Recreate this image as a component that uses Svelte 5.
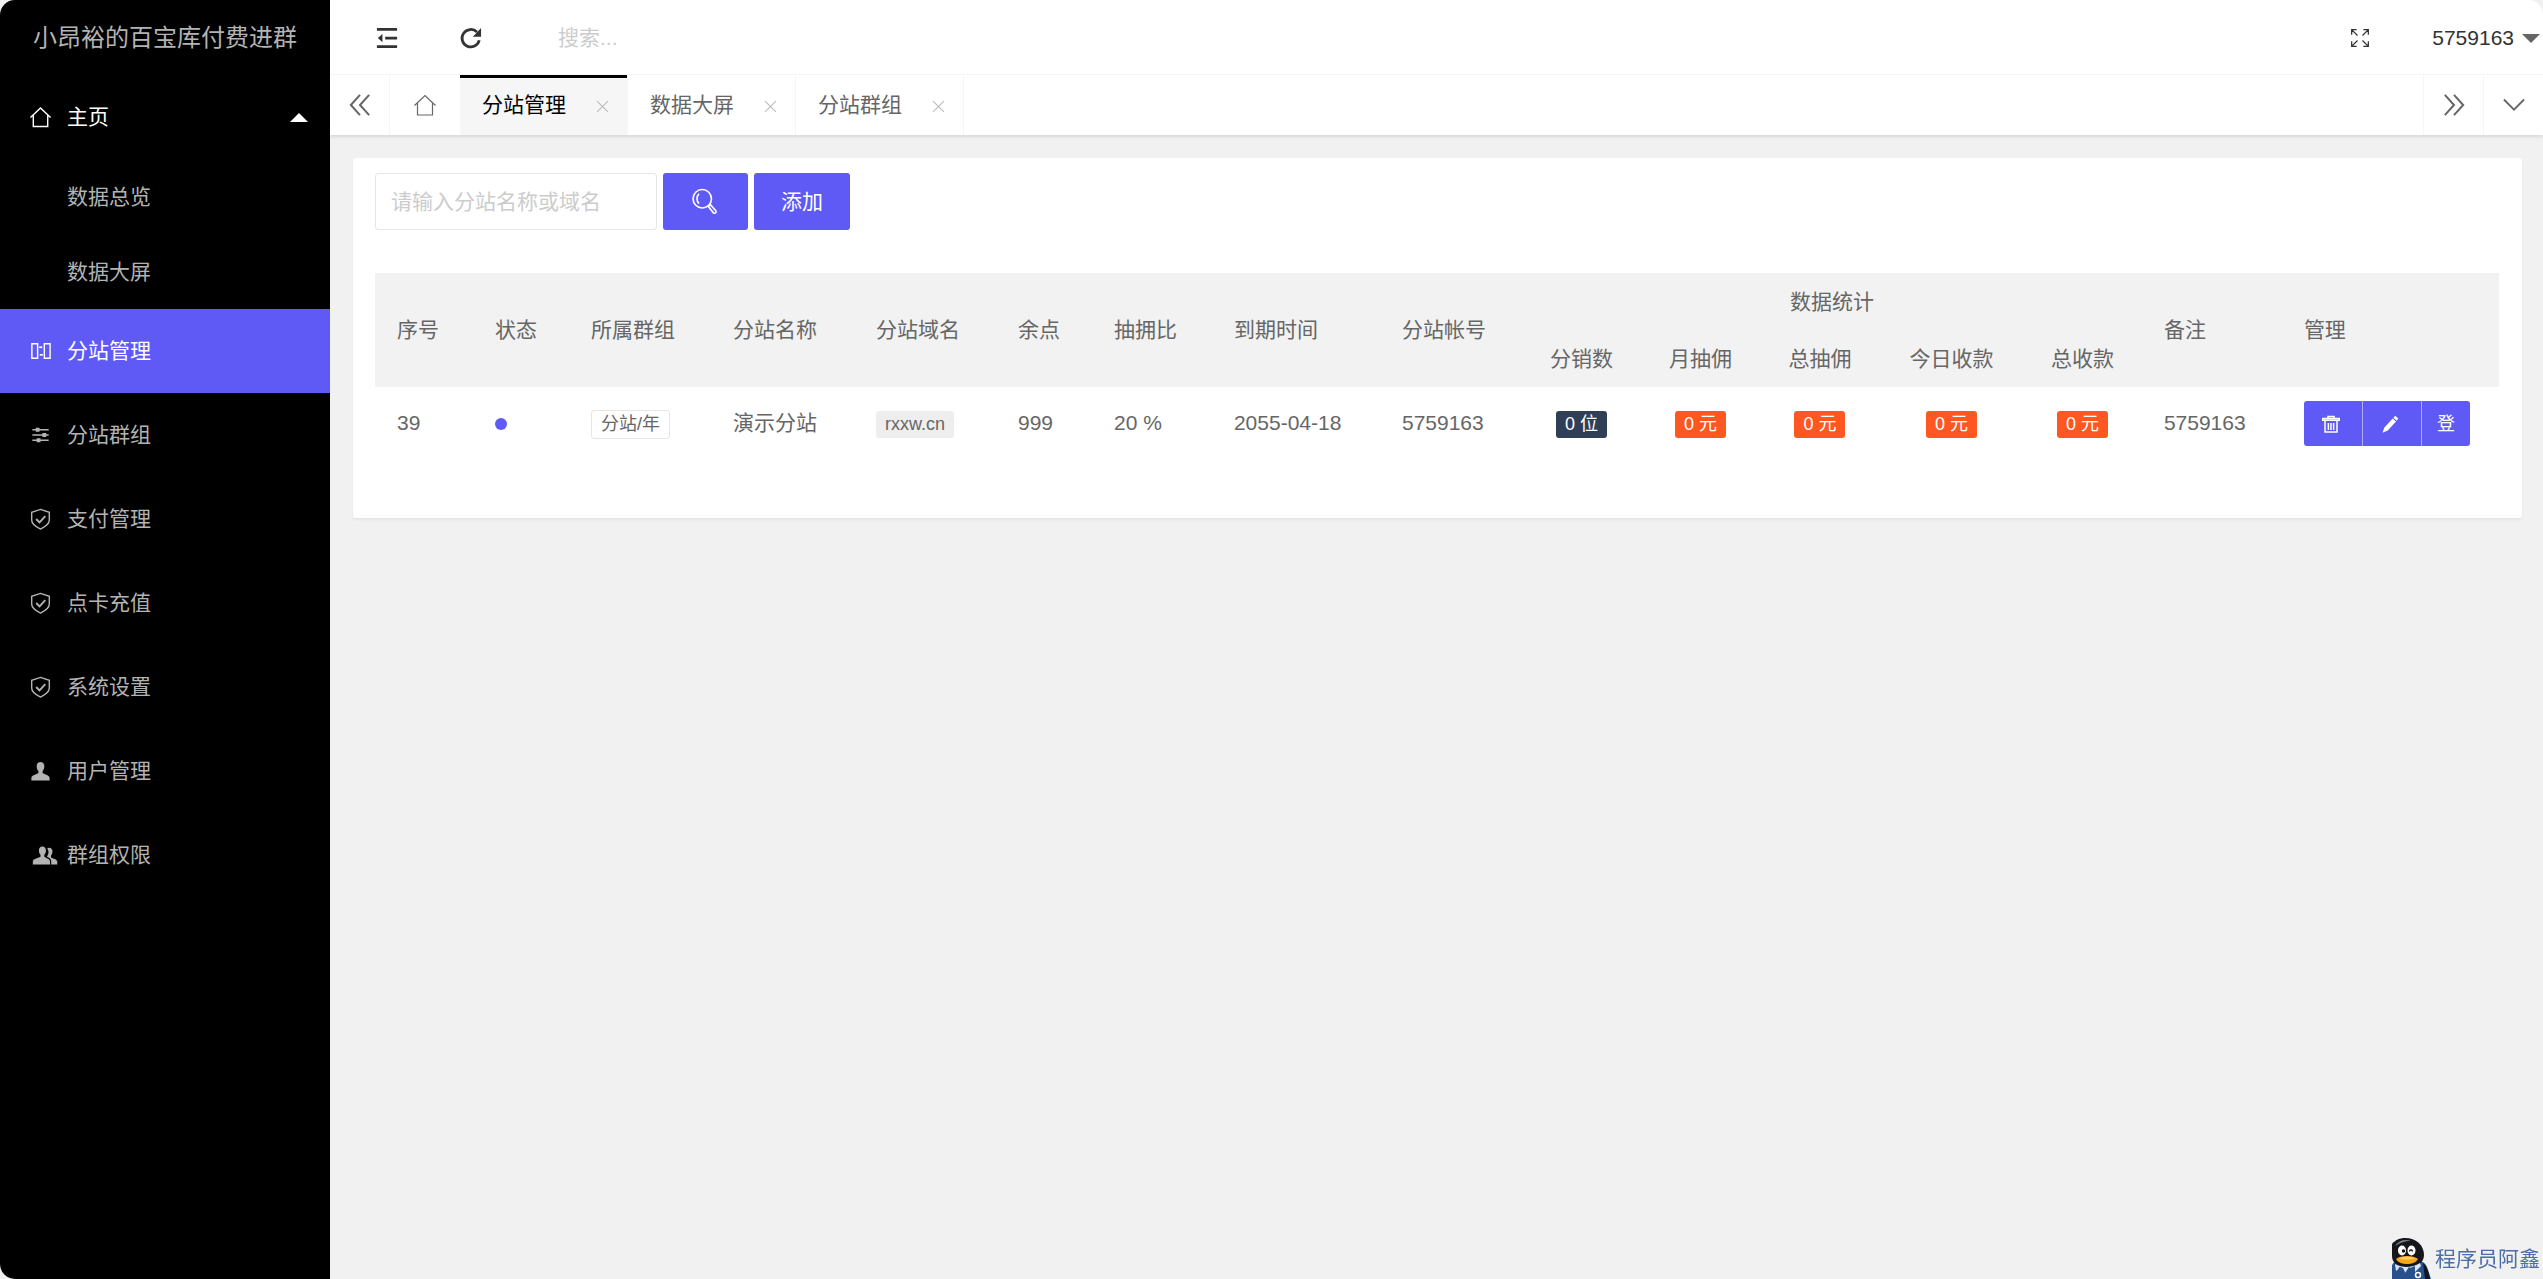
<script lang="ts">
  interface NavItem {
    label: string;
    icon: string;
    active?: boolean;
  }

  interface Site {
    id: number;
    group: string;
    name: string;
    domain: string;
    points: number;
    rate: string;
    expires: string;
    account: string;
    resellers: string;
    totals: string[];
    remark: string;
  }

  const children = ['数据总览', '数据大屏'];

  const nav: NavItem[] = [
    { label: '分站管理', icon: 'map', active: true },
    { label: '分站群组', icon: 'sliders' },
    { label: '支付管理', icon: 'shield' },
    { label: '点卡充值', icon: 'shield' },
    { label: '系统设置', icon: 'shield' },
    { label: '用户管理', icon: 'user' },
    { label: '群组权限', icon: 'users' }
  ];

  let tabs = $state(['分站管理', '数据大屏', '分站群组']);
  let current = $state('分站管理');
  let open = $state(true);
  let keyword = $state('');

  const leading = ['序号', '状态', '所属群组', '分站名称', '分站域名', '余点', '抽拥比', '到期时间', '分站帐号'];
  const stats = ['分销数', '月抽佣', '总抽佣', '今日收款', '总收款'];
  const trailing = ['备注', '管理'];

  // relative column weights, turned into percentages below
  const weights = [98, 96, 142, 143, 142, 96, 120, 168, 142, 119, 119, 120, 143, 119, 140, 217];
  const weightSum = weights.reduce((a, b) => a + b, 0);

  const sites: Site[] = [
    {
      id: 39,
      group: '分站/年',
      name: '演示分站',
      domain: 'rxxw.cn',
      points: 999,
      rate: '20 %',
      expires: '2055-04-18',
      account: '5759163',
      resellers: '0 位',
      totals: ['0 元', '0 元', '0 元', '0 元'],
      remark: '5759163'
    }
  ];

  function closeTab(tab: string) {
    tabs = tabs.filter((t) => t !== tab);
    if (current === tab) current = tabs[0] ?? '';
  }
</script>

{#snippet icon(name: string)}
  <svg class="icon" viewBox="0 0 24 24" aria-hidden="true" fill="none" stroke="currentColor" stroke-width="1.5">
    {#if name === 'home'}
      <path d="M1.5 12.5 12 2.5l10.5 10M4.5 10.5V22h15V10.5" />
    {:else if name === 'map'}
      <path d="M3 4.5h6v15H3zM16 4.5h6v15h-6zM10.5 8H13M13 7v2M12 16h2.5M12 15v2" />
    {:else if name === 'sliders'}
      <path d="M3.5 6.5h17M3.5 12h17M3.5 17.5h17" />
      <path d="M7 4.5h4v4H7zM14 10h4v4h-4zM8 15.5h4v4H8z" fill="currentColor" stroke="none" />
    {:else if name === 'shield'}
      <path d="M12 2 21.2 5v8c0 4-4 7-9.2 9.5C6.8 20 2.8 17 2.8 13V5z" />
      <path d="m7.5 12 3.5 3.5 6-6.5" stroke-width="2" />
    {:else if name === 'user'}
      <path d="M12 2.5c2.6 0 4 1.9 4 4.5 0 2.2-.8 4-1.8 5v2c2 1.5 7.3 2.3 7.3 5v3h-19v-3c0-2.7 5.3-3.5 7.3-5v-2C8.8 11 8 9.2 8 7c0-2.6 1.4-4.5 4-4.5z" fill="currentColor" stroke="none" />
    {:else if name === 'users'}
      <path d="M14 3c2.4 0 3.7 1.8 3.7 4.2 0 2-.7 3.6-1.7 4.6v2c2 1.5 6 2.2 6 5V22H4v-3.2c0-2.8 5-3.5 8-5v-2c-1-1-1.7-2.6-1.7-4.6C10.3 4.8 11.6 3 14 3z" fill="currentColor" stroke="none" />
      <path d="M19 5c2.5-1.5 5.8.2 5.5 3.5-.1 1.6-.8 3-1.5 4v2c2 1.2 6.5 1.8 6.5 4.5v3h-6.3v-3.5c0-2.5-2-3.6-4.5-4.8C20.8 11 21 8 19 5z" fill="currentColor" stroke="none" />
    {:else if name === 'menu'}
      <path d="M1 2.5h22M10 12h13M1 21.5h22" stroke-width="3" />
      <path d="M7 7.5v9L2 12z" fill="currentColor" stroke="none" />
    {:else if name === 'refresh'}
      <path d="M21 14.5A9.5 9.5 0 1 1 18.5 5.5" stroke-width="3" />
      <path d="M23 1v9.5h-9z" fill="currentColor" stroke="none" />
    {:else if name === 'fullscreen'}
      <path d="M9 9 2.5 2.5M2 8V2h6M15 9l6.5-6.5M16 2h6v6M9 15l-6.5 6.5M2 16v6h6M15 15l6.5 6.5M22 16v6h-6" />
    {:else if name === 'left'}
      <path d="M12 1 2 12l10 11M22 1 12 12l10 11" stroke-width="2.2" />
    {:else if name === 'right'}
      <path d="m2 1 10 11L2 23M12 1l10 11-10 11" stroke-width="2.2" />
    {:else if name === 'down'}
      <path d="m1 6 11 11L23 6" stroke-width="2" />
    {:else if name === 'search'}
      <circle cx="9" cy="9" r="8.5" />
      <path d="M6 13.5C3.5 11 3.5 7 6 4.5" />
      <path d="m14.5 16 2-1.5 5 5.5c1 1.5-1 3-2.2 2z" />
    {:else if name === 'trash'}
      <path d="M8 4V2h8v2M1 4.5h22V7H1zM4 8v14.5h16V8M8.5 10.5V20M12 10.5V20M15.5 10.5V20" stroke-width="2" />
    {:else if name === 'edit'}
      <path d="m19 1 4 3.5-2 3-4.5-3.8zM15.5 4.8l4.5 3.8-11 12L2 23.500 4.5 16.500z" fill="currentColor" stroke="none" />
    {:else if name === 'close'}
      <path d="m2 2 20 20M22 2 2 22" stroke-width="2" />
    {/if}
  </svg>
{/snippet}

<div class="backdrop">
  <div class="admin">
    <aside class="side">
      <div class="logo">小昂裕的百宝库付费进群</div>
      <nav>
        <button type="button" class="item parent" aria-expanded={open} onclick={() => (open = !open)}>
          {@render icon('home')}
          <span>主页</span>
          <i class="caret" class:open></i>
        </button>
        {#if open}
          {#each children as child}
            <a class="child" href="#top">{child}</a>
          {/each}
        {/if}
        {#each nav as item}
          <a class="item" class:active={item.active} href="#top">
            {@render icon(item.icon)}
            <span>{item.label}</span>
          </a>
        {/each}
      </nav>
    </aside>

    <div class="main">
      <header class="header">
        <button type="button" class="tool" aria-label="侧边伸缩">{@render icon('menu')}</button>
        <button type="button" class="tool" aria-label="刷新">{@render icon('refresh')}</button>
        <input class="find" type="text" placeholder="搜索..." aria-label="搜索" />
        <button type="button" class="tool full" aria-label="全屏">{@render icon('fullscreen')}</button>
        <button type="button" class="account">5759163<i class="caret"></i></button>
      </header>

      <div class="tabs">
        <button type="button" class="step first" aria-label="向左">{@render icon('left')}</button>
        <button type="button" class="home" aria-label="主页">{@render icon('home')}</button>
        {#each tabs as tab (tab)}
          <div class="tab" class:current={tab === current}>
            <button type="button" class="name" onclick={() => (current = tab)}>{tab}</button>
            <button type="button" class="close" aria-label="关闭" onclick={() => closeTab(tab)}>
              {@render icon('close')}
            </button>
          </div>
        {/each}
        <button type="button" class="step end" aria-label="向右">{@render icon('right')}</button>
        <button type="button" class="step" aria-label="更多">{@render icon('down')}</button>
      </div>

      <main class="body">
        <section class="card">
          <form class="toolbar" onsubmit={(e) => e.preventDefault()}>
            <input type="text" bind:value={keyword} placeholder="请输入分站名称或域名" aria-label="分站名称或域名" />
            <button type="submit" class="btn" aria-label="查询">{@render icon('search')}</button>
            <button type="button" class="btn">添加</button>
          </form>

          <table>
            <colgroup>
              {#each weights as weight}
                <col style:width="{(weight / weightSum) * 100}%" />
              {/each}
            </colgroup>
            <thead>
              <tr>
                {#each leading as title}
                  <th rowspan="2">{title}</th>
                {/each}
                <th class="center" colspan={stats.length}>数据统计</th>
                {#each trailing as title}
                  <th rowspan="2">{title}</th>
                {/each}
              </tr>
              <tr>
                {#each stats as title}
                  <th class="center">{title}</th>
                {/each}
              </tr>
            </thead>
            <tbody>
              {#each sites as site (site.id)}
                <tr>
                  <td>{site.id}</td>
                  <td><span class="dot"></span></td>
                  <td><span class="badge rim">{site.group}</span></td>
                  <td>{site.name}</td>
                  <td><span class="badge gray">{site.domain}</span></td>
                  <td>{site.points}</td>
                  <td>{site.rate}</td>
                  <td>{site.expires}</td>
                  <td>{site.account}</td>
                  <td class="center"><span class="badge dark">{site.resellers}</span></td>
                  {#each site.totals as total}
                    <td class="center"><span class="badge">{total}</span></td>
                  {/each}
                  <td>{site.remark}</td>
                  <td class="actions">
                    <div class="group">
                      <button type="button" aria-label="删除">{@render icon('trash')}</button>
                      <button type="button" aria-label="编辑">{@render icon('edit')}</button>
                      <button type="button">登</button>
                    </div>
                  </td>
                </tr>
              {/each}
            </tbody>
          </table>
        </section>
      </main>
    </div>
  </div>

  <div class="mark">
    <svg viewBox="0 0 39 41" aria-hidden="true">
      <path d="M0 30c-1-3 2-6 4-7h24c5 1 7 5 8 9l3 9H0z" fill="#28508c" />
      <path d="M31 25c4 3 6 10 7 16h-5z" fill="#10151f" />
      <path d="M13 0c11 0 19 7 19 17 0 8-7 12-17 12C6 29 0 25 0 18V6c3-4 8-6 13-6z" fill="#14161c" />
      <path d="M3 8C7 2 13 1 19 3 12 3 8 5 3 8z" fill="#7b818c" />
      <ellipse cx="10" cy="12.5" rx="4" ry="5" fill="#fff" />
      <ellipse cx="19.5" cy="12.5" rx="4" ry="5" fill="#fff" />
      <circle cx="11.5" cy="13" r="1.7" fill="#111" />
      <path d="M17.5 13.5c0-2 3-2 3 0" fill="none" stroke="#111" stroke-width="1.3" />
      <path d="M4 21c4-4 18-4 22 0-2 4-7 5-11 5S6 25 4 21z" fill="#f8a51b" />
      <path d="M7 20.5c4-2.5 12-2.5 16 0-4 1.5-12 1.5-16 0z" fill="#ffd257" />
      <path d="M3 26c7 4 17 4 25-1l1 3-6 6-6-5-4 6-4-6-5 4z" fill="#dbe7f6" />
      <path d="m7 29 4 1 3 6 4-6 5-2v8H5z" fill="#28508c" />
      <circle cx="26" cy="37" r="2.5" fill="none" stroke="#fff" stroke-width="1.5" />
    </svg>
    <span>程序员阿鑫</span>
  </div>
</div>

<style>
  :global(body) {
    background: #f1f1f1;
  }

  .backdrop {
    min-height: 100vh;
    background: #f1f1f1;
    color: #666;
    font: 400 21px/36px 'Liberation Sans', 'Noto Sans CJK SC', sans-serif;
  }

  .admin {
    display: flex;
    min-height: 100vh;
    border-radius: 15px;
    overflow: hidden;
  }

  button,
  input {
    margin: 0;
    padding: 0;
    border: 0;
    background: none;
    color: inherit;
    font: inherit;
  }

  button {
    cursor: pointer;
  }

  a {
    color: inherit;
    text-decoration: none;
  }

  .icon {
    display: block;
    flex: none;
    width: 24px;
    height: 24px;
    overflow: visible;
  }

  .caret {
    border: 9px solid transparent;
    border-top-color: currentColor;
    border-bottom: 0;
  }

  .caret.open {
    border-top: 0;
    border-bottom: 9px solid currentColor;
  }

  /* sidebar */
  .side {
    flex: none;
    width: 330px;
    background: #000;
    color: #b3b3b3;
  }

  .logo {
    height: 75px;
    font-size: 24px;
    line-height: 75px;
    text-align: center;
  }

  .item {
    display: flex;
    align-items: center;
    gap: 15px;
    box-sizing: border-box;
    width: 100%;
    height: 84px;
    padding: 0 22px 0 29px;
  }

  .item .icon {
    width: 23px;
  }

  .parent {
    color: #fff;
  }

  .parent .caret {
    margin-left: auto;
  }

  .item.active {
    background: #5f59f5;
    color: #fff;
  }

  .child {
    display: block;
    padding-left: 67px;
    line-height: 75px;
  }

  /* top bar */
  .main {
    flex: 1;
    min-width: 0;
  }

  .header {
    display: flex;
    align-items: center;
    box-sizing: border-box;
    height: 75px;
    padding-top: 2px;
    border-bottom: 1px solid #f6f6f6;
    background: #fff;
    color: #333;
  }

  .tool {
    padding: 0 30px;
  }

  .header .tool:first-child {
    padding-left: 45px;
  }

  .header .icon {
    width: 24px;
    height: 22px;
  }

  .find {
    width: 270px;
    margin-left: 45px;
  }

  .find::placeholder,
  .toolbar input::placeholder {
    color: #ccc;
    opacity: 1;
  }

  .full {
    margin-left: auto;
  }

  .header .full .icon {
    width: 20px;
    height: 20px;
  }

  .account {
    display: flex;
    align-items: center;
    gap: 8px;
    padding: 0 3px 0 32px;
  }

  .account .caret {
    color: #666;
  }

  /* page tabs */
  .tabs {
    position: relative;
    display: flex;
    height: 60px;
    background: #fff;
    box-shadow: 0 2px 3px rgba(0, 0, 0, 0.1);
  }

  .step {
    display: grid;
    place-items: center;
    width: 60px;
    border-left: 1px solid #f6f6f6;
  }

  .step.first {
    border-right: 1px solid #f6f6f6;
    border-left: 0;
  }

  .step.end {
    margin-left: auto;
  }

  .step .icon {
    width: 22px;
    height: 22px;
  }

  .home {
    display: grid;
    place-items: center;
    width: 70px;
  }

  .home .icon {
    stroke-width: 1.2;
  }

  .tab {
    display: flex;
    align-items: center;
    gap: 30px;
    box-sizing: border-box;
    padding: 0 18px 0 22px;
    border-right: 1px solid #f6f6f6;
  }

  .tab.current {
    background: #f6f6f6;
    box-shadow: inset 0 3px #000;
    color: #000;
  }

  .close {
    padding-top: 3px;
    color: #bbb;
  }

  .close .icon {
    width: 13px;
    height: 13px;
  }

  /* content */
  .body {
    padding: 23px 21px 23px 23px;
  }

  .card {
    padding: 15px 23px 58px 22px;
    border-radius: 3px;
    background: #fff;
    box-shadow: 0 2px 3px rgba(0, 0, 0, 0.05);
  }

  .toolbar {
    display: flex;
    gap: 6px;
    margin-bottom: 43px;
  }

  .toolbar input {
    box-sizing: border-box;
    width: 282px;
    height: 57px;
    padding: 0 15px;
    border: 1px solid #e6e6e6;
    border-radius: 3px;
  }

  .btn {
    height: 57px;
    padding: 0 27px;
    border-radius: 3px;
    background: #5f59f5;
    color: #fff;
  }

  .btn .icon {
    width: 31px;
    height: 26px;
  }

  table {
    width: 100%;
    border-collapse: collapse;
    table-layout: fixed;
  }

  thead {
    background: #f2f2f2;
  }

  th {
    height: 57px;
    padding: 0 22px;
    font-weight: 400;
    text-align: left;
    white-space: nowrap;
  }

  td {
    height: 45px;
    padding: 13px 22px 15px;
    white-space: nowrap;
  }

  .actions {
    padding: 14px 22px;
  }

  .center {
    text-align: center;
  }

  .badge {
    display: inline-block;
    padding: 0 9px;
    border-radius: 3px;
    background: #ff5722;
    color: #fff;
    font-size: 18px;
    line-height: 27px;
  }

  .badge.dark {
    background: #2f4056;
  }

  .badge.gray {
    background: #eee;
    color: #666;
  }

  .badge.rim {
    border: 1px solid #e6e6e6;
    background: #fff;
    color: #666;
  }

  .dot {
    display: inline-block;
    width: 12px;
    height: 12px;
    border-radius: 50%;
    background: #5f59f5;
  }

  .group {
    display: inline-flex;
    vertical-align: middle;
    border-radius: 3px;
    background: #5f59f5;
    color: #fff;
    font-size: 18px;
  }

  .group button {
    height: 45px;
    padding: 0 15px;
  }

  .group button + button {
    border-left: 1px solid rgba(255, 255, 255, 0.5);
  }

  .group .icon {
    width: 24px;
    height: 18px;
    margin-right: 4px;
  }

  .mark {
    position: fixed;
    right: 3px;
    bottom: 0;
    display: flex;
    align-items: center;
    gap: 4px;
    color: #4a6fa9;
  }

  .mark svg {
    width: 39px;
    height: 41px;
  }
</style>
